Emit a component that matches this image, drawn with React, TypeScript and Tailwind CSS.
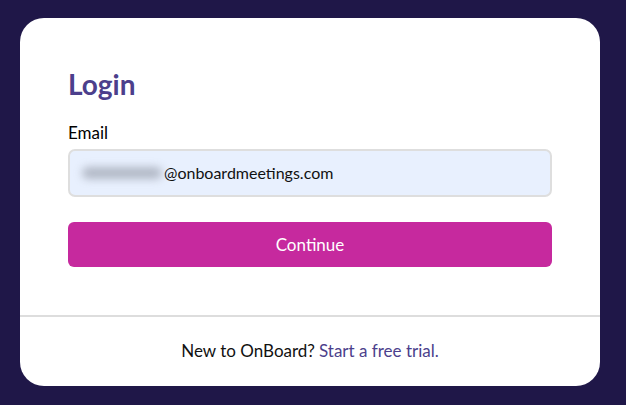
export default function App() {
  return (
    <div className="w-[626px] h-[405px] bg-[#1f1748] pt-[18px] pl-[20px] font-['Lato','Liberation_Sans',sans-serif]">
      <div className="w-[580px] h-[368px] bg-white rounded-[24px] flex flex-col overflow-hidden">
        <div className="px-[48px] pt-[49px] h-[297px]">
          <h1 className="text-[28px] leading-[34px] font-bold text-[#4c3f8c]">Login</h1>
          <label className="block mt-[21px] text-[17px] leading-[22px] text-black">Email</label>
          <div className="mt-[5px] h-[48px] rounded-[7px] border-2 border-[#dedede] bg-[#e8f0fe] flex items-center pl-[12px]">
            <span className="w-[80px] h-[12px] rounded-full bg-[#9aa0ad] blur-[4px] opacity-70 mr-[2px]" />
            <span className="text-[16px] text-[#111]">@onboardmeetings.com</span>
          </div>
          <button className="mt-[25px] w-full h-[45px] rounded-[6px] bg-[#c6299e] text-white text-[17px]">
            Continue
          </button>
        </div>
        <div className="h-[2px] bg-[#dddddd]" />
        <div className="flex-1 flex items-center justify-center pb-[2px] text-[17px]">
          <span className="text-[#111]">New to OnBoard?</span>
          <span className="ml-[4px] text-[#4c3f8c]">Start a free trial.</span>
        </div>
      </div>
    </div>
  );
}
